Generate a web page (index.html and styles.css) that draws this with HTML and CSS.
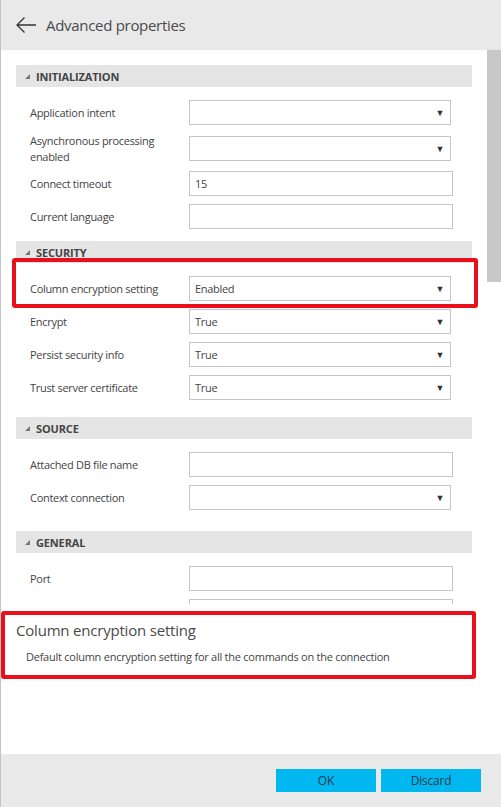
FILE: index.html
```html
<!DOCTYPE html>
<html>
<head>
<meta charset="utf-8">
<link rel="stylesheet" href="styles.css">
</head>
<body>
<div class="page">
  <header class="header">
    <svg class="back" width="22" height="18" viewBox="0 0 22 18"><path d="M21 9H2M9.5 1.5L2 9l7.5 7.5" fill="none" stroke="#333" stroke-width="1.3"/></svg>
    <span class="title">Advanced properties</span>
  </header>
  <div class="main">
    <div class="scroll">
      <section class="sec sec-init">
        <div class="bar"><svg class="tri" width="5" height="5" viewBox="0 0 5 5"><path d="M5 0V5H0Z" fill="#777"/></svg>INITIALIZATION</div>
        <div class="row"><span class="lbl">Application intent</span><div class="ctl sel"><span class="val"></span><span class="arr">▼</span></div></div>
        <div class="row row-tall"><span class="lbl">Asynchronous processing<br>enabled</span><div class="ctl sel"><span class="val"></span><span class="arr">▼</span></div></div>
        <div class="row"><span class="lbl">Connect timeout</span><div class="ctl inp"><span class="val">15</span></div></div>
        <div class="row"><span class="lbl">Current language</span><div class="ctl inp"><span class="val"></span></div></div>
      </section>
      <section class="sec sec-sec">
        <div class="bar"><svg class="tri" width="5" height="5" viewBox="0 0 5 5"><path d="M5 0V5H0Z" fill="#777"/></svg>SECURITY</div>
        <div class="row row-mark"><span class="lbl">Column encryption setting</span><div class="ctl sel"><span class="val">Enabled</span><span class="arr">▼</span></div><div class="mark"></div></div>
        <div class="row"><span class="lbl">Encrypt</span><div class="ctl sel"><span class="val">True</span><span class="arr">▼</span></div></div>
        <div class="row"><span class="lbl">Persist security info</span><div class="ctl sel"><span class="val">True</span><span class="arr">▼</span></div></div>
        <div class="row"><span class="lbl">Trust server certificate</span><div class="ctl sel"><span class="val">True</span><span class="arr">▼</span></div></div>
      </section>
      <section class="sec sec-src">
        <div class="bar"><svg class="tri" width="5" height="5" viewBox="0 0 5 5"><path d="M5 0V5H0Z" fill="#777"/></svg>SOURCE</div>
        <div class="row"><span class="lbl">Attached DB file name</span><div class="ctl inp"><span class="val"></span></div></div>
        <div class="row"><span class="lbl">Context connection</span><div class="ctl sel"><span class="val"></span><span class="arr">▼</span></div></div>
      </section>
      <section class="sec sec-gen">
        <div class="bar"><svg class="tri" width="5" height="5" viewBox="0 0 5 5"><path d="M5 0V5H0Z" fill="#777"/></svg>GENERAL</div>
        <div class="row"><span class="lbl">Port</span><div class="ctl inp"><span class="val"></span></div></div>
        <div class="row"><span class="lbl"></span><div class="ctl inp"><span class="val"></span></div></div>
      </section>
    </div>
    <div class="track"><div class="thumb"></div></div>
  </div>
  <div class="desc-area">
    <div class="desc">
      <div class="desc-title">Column encryption setting</div>
      <div class="desc-text">Default column encryption setting for all the commands on the connection</div>
    </div>
  </div>
  <footer class="footer">
    <button class="btn">OK</button>
    <button class="btn">Discard</button>
  </footer>
</div>
</body>
</html>
```
FILE: styles.css
```css
html, body {
  margin: 0;
  padding: 0;
  background: #fff;
}
body {
  font-family: "Open Sans", "Noto Sans", sans-serif;
  color: #444;
}
.page {
  width: 500px;
  height: 807px;
  border-left: 1px solid #c4c4c4;
  display: flex;
  flex-direction: column;
  overflow: hidden;
}
.header {
  height: 50px;
  flex: none;
  background: #e9e9e9;
  display: flex;
  align-items: center;
  padding-left: 14px;
}
.back {
  display: block;
  margin-right: 9px;
}
.title {
  font-size: 15px;
  letter-spacing: -0.3px;
  color: #4a4a4a;
}
.main {
  height: 554px;
  flex: none;
  display: flex;
  overflow: hidden;
}
.scroll {
  flex: 1;
  padding: 0 15px 0 15px;
  overflow: hidden;
}
.track {
  width: 14px;
  flex: none;
}
.thumb {
  height: 232px;
  background: #c8c8c8;
}
.sec {
  margin-top: 12px;
}
.sec-init { margin-top: 15px; }
.sec-sec { margin-top: 8px; }
.sec-src { margin-top: 13px; }
.sec-gen { margin-top: 17px; }
.bar {
  height: 22px;
  background: #e5e5e5;
  display: flex;
  align-items: center;
  font-size: 11px;
  font-weight: 700;
  letter-spacing: -0.15px;
  color: #444;
  padding-left: 9px;
  margin-bottom: 9px;
}
.tri {
  display: block;
  margin-right: 6px;
  margin-top: 1px;
}
.row {
  height: 33px;
  display: flex;
  align-items: center;
  padding-left: 14px;
  position: relative;
}
.row-tall {
  height: 38px;
}
.lbl {
  width: 159px;
  flex: none;
  font-size: 11px;
  line-height: 16px;
  letter-spacing: -0.3px;
  color: #444;
  padding-top: 1px;
}
.ctl {
  height: 25px;
  box-sizing: border-box;
  border: 1px solid #c6c6c6;
  display: flex;
  align-items: center;
  padding: 0 5px 0 5px;
  font-size: 11px;
  letter-spacing: -0.3px;
  color: #444;
  background: #fff;
}
.sel { width: 262px; }
.inp { width: 264px; }
.val { flex: 1; }
.arr {
  font-size: 9px;
  color: #333;
  margin-right: 1px;
}
.mark {
  position: absolute;
  left: -4px;
  top: -14px;
  width: 466px;
  height: 50px;
  box-sizing: border-box;
  border: 4px solid #e8101a;
  border-radius: 3px;
  pointer-events: none;
}
.desc-area {
  height: 150px;
  flex: none;
  padding-top: 7px;
  box-sizing: border-box;
}
.desc {
  width: 475px;
  height: 68px;
  box-sizing: border-box;
  border: 4px solid #e8101a;
  border-radius: 3px;
  padding: 4px 0 0 11px;
}
.desc-title {
  font-size: 15px;
  line-height: 22px;
  letter-spacing: -0.2px;
  color: #4a4a4a;
}
.desc-text {
  font-size: 11px;
  line-height: 16px;
  letter-spacing: -0.25px;
  margin-top: 8px;
  padding-left: 10px;
  color: #444;
}
.footer {
  flex: 1;
  background: #e9e9e9;
  display: flex;
  justify-content: flex-end;
  align-items: flex-start;
  padding: 15px 20px 0 0;
  gap: 5px;
}
.btn {
  width: 100px;
  height: 23px;
  border: none;
  background: #00b7f0;
  font-family: "Open Sans", "Noto Sans", sans-serif;
  font-size: 12px;
  letter-spacing: -0.2px;
  color: #2a3a48;
  padding: 0;
}
```
